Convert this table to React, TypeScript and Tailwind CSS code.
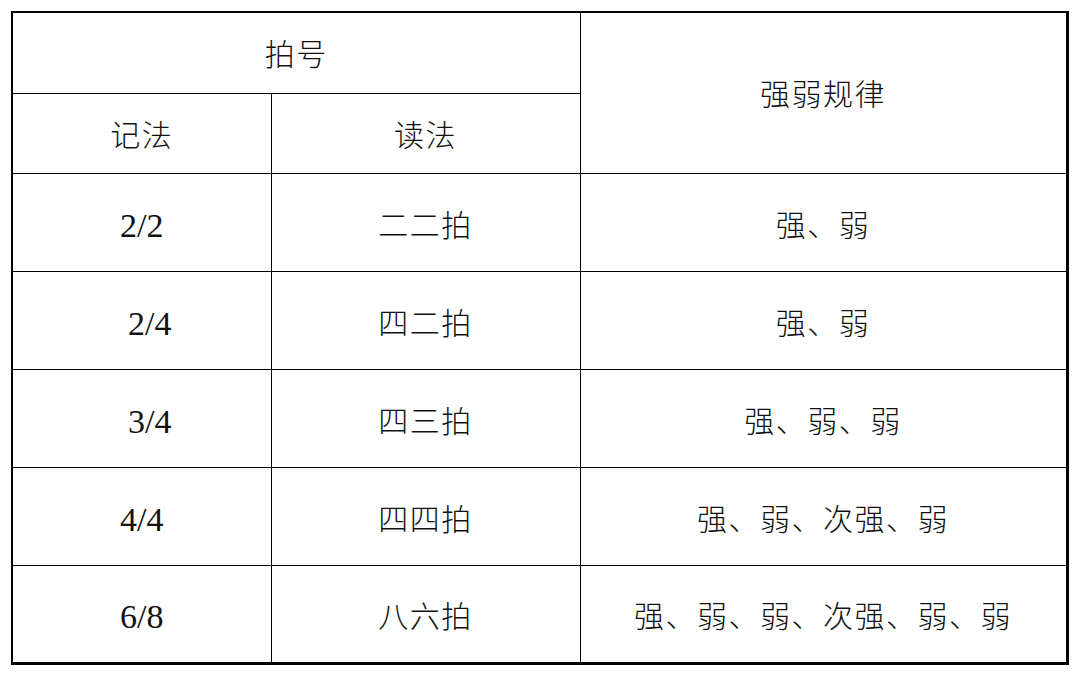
const rows = [
    { sign: '2/2', name: '二二拍', rule: '强、弱', indent: false },
    { sign: '2/4', name: '四二拍', rule: '强、弱', indent: true },
    { sign: '3/4', name: '四三拍', rule: '强、弱、弱', indent: true },
    { sign: '4/4', name: '四四拍', rule: '强、弱、次强、弱', indent: false },
    { sign: '6/8', name: '八六拍', rule: '强、弱、弱、次强、弱、弱', indent: false },
];

const cell = 'border-[1.5px] border-black text-center align-middle p-0';

export default function App() {
    return (
        <div
            className="w-[1080px] h-[676px] bg-white pt-[11px] pl-[11px] text-[30px] font-light text-[#111] tracking-[1.5px]"
            style={{ fontFamily: '"Liberation Serif", "Noto Sans CJK SC", serif' }}
        >
            <table className="table-fixed border-collapse border-t-2 border-l-2 border-r-[3px] border-b-[3px] border-black w-[1055px]">
                <colgroup>
                    <col className="w-[259px]" />
                    <col className="w-[309px]" />
                    <col className="w-[487px]" />
                </colgroup>
                <thead>
                    <tr className="h-[81px]">
                        <th colSpan={2} className={`${cell} font-light pt-[4px]`}>
                            拍号
                        </th>
                        <th rowSpan={2} className={`${cell} font-light pt-[4px]`}>
                            强弱规律
                        </th>
                    </tr>
                    <tr className="h-[80px]">
                        <th className={`${cell} font-light pt-[4px]`}>记法</th>
                        <th className={`${cell} font-light pt-[4px]`}>读法</th>
                    </tr>
                </thead>
                <tbody>
                    {rows.map((r) => (
                        <tr key={r.sign} className="h-[98px]">
                            <td
                                className={`${cell} pt-[6px] text-[34px] font-normal tracking-normal`}
                                style={{ fontFamily: '"Liberation Serif", serif' }}
                            >
                                <span className={r.indent ? 'pl-[16px]' : ''}>{r.sign}</span>
                            </td>
                            <td className={`${cell} pt-[6px]`}>{r.name}</td>
                            <td className={`${cell} pt-[6px]`}>{r.rule}</td>
                        </tr>
                    ))}
                </tbody>
            </table>
        </div>
    );
}
